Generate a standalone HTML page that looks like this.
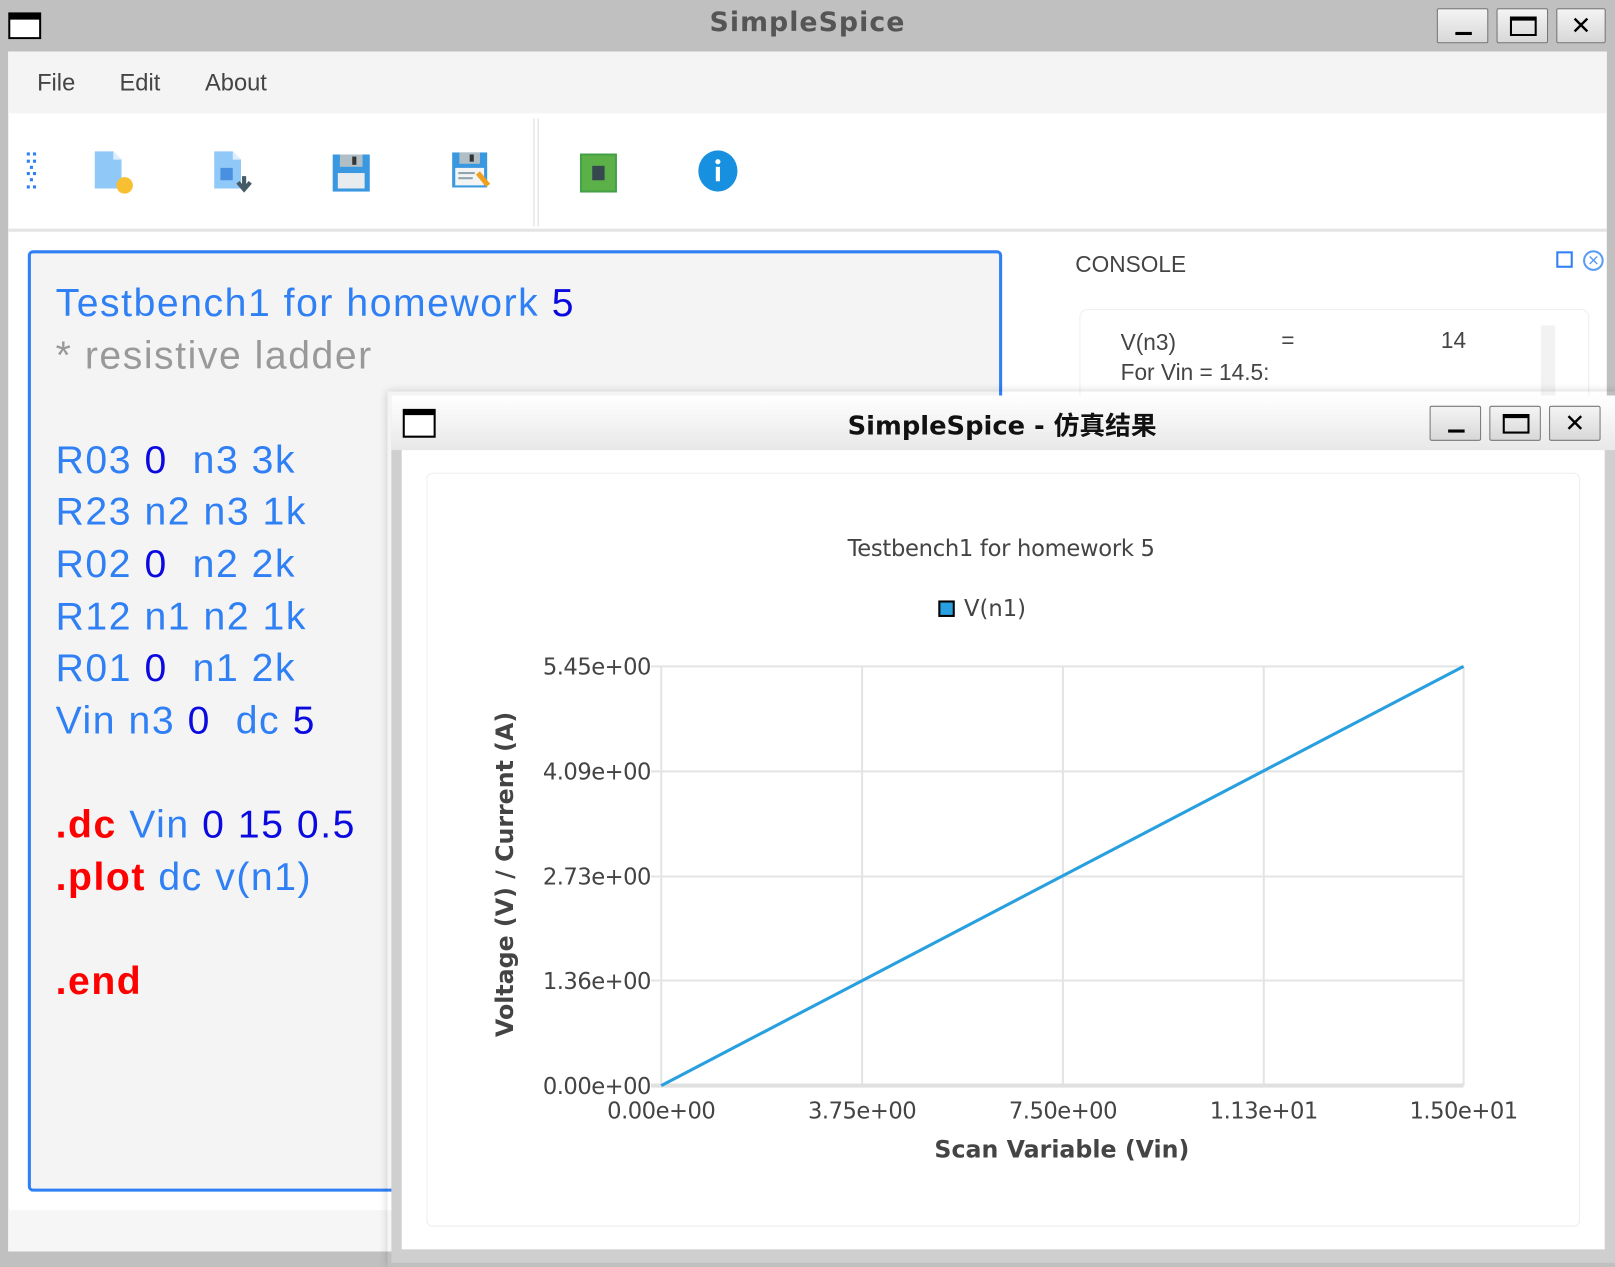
<!DOCTYPE html>
<html><head><meta charset="utf-8"><style>
*{margin:0;padding:0;box-sizing:border-box}
html,body{width:1615px;height:1263px;overflow:hidden;background:#c0c0c0;font-family:"Liberation Sans","Noto Sans CJK SC",sans-serif}
#w{position:absolute;left:0;top:0;width:1568px;height:1226px;transform:scale(1.02997);transform-origin:0 0;background:#c0c0c0}
.a{position:absolute}
.btn{position:absolute;border:1px solid #777;background:linear-gradient(#f4f4f4,#d8d8d8);border-radius:2px}
.ed{font-size:38px;color:#2f7ff5;white-space:pre;line-height:50.6px;letter-spacing:1.5px}
.d{color:#0a0ae0}.r{color:#f00;font-weight:bold}.g{color:#999}
.tk{position:absolute;font-size:22px;color:#444;font-family:"DejaVu Sans",sans-serif;letter-spacing:-0.5px}
</style></head><body><div id="w">
<div class="a" style="left:8px;top:12px;width:32px;height:26px;border:2px solid #000;border-top-width:7px;background:#fff"></div>
<div class="a" style="left:0;width:1568px;top:7px;text-align:center;font-size:26px;font-weight:bold;color:#555;font-family:'DejaVu Sans',sans-serif;letter-spacing:1px">SimpleSpice</div>
<div class="btn" style="left:1395px;top:8px;width:50px;height:34px"><div class="a" style="left:17px;top:22px;width:16px;height:3px;background:#000"></div></div>
<div class="btn" style="left:1453px;top:8px;width:50px;height:34px"><div class="a" style="left:12px;top:7px;width:26px;height:19px;border:2px solid #000;border-top-width:4px"></div></div>
<div class="btn" style="left:1511px;top:8px;width:48px;height:34px;text-align:center;font:bold 24px 'DejaVu Sans';line-height:32px">✕</div>
<div class="a" style="left:8px;top:50px;width:1552px;height:1165px;background:#fff"></div>
<div class="a" style="left:8px;top:50px;width:1552px;height:60px;background:#f4f4f4;font-size:23px;color:#444">
<span class="a" style="left:28px;top:17px">File</span><span class="a" style="left:108px;top:17px">Edit</span><span class="a" style="left:191px;top:17px">About</span></div>
<div class="a" style="left:8px;top:222px;width:1552px;height:3px;background:#e4e4e4"></div>
<div class="a" style="left:518px;top:115px;width:5px;height:105px;border-left:1px solid #ddd;border-right:1px solid #ddd"></div>
<svg class="a" style="left:24px;top:147px" width="16" height="42"><g fill="#2f7ff5"><rect x="2" y="1" width="3" height="3"/><rect x="8" y="1" width="3" height="3"/><rect x="2" y="8" width="3" height="3"/><rect x="8" y="8" width="3" height="3"/><rect x="5" y="14" width="3" height="3"/><rect x="2" y="20" width="3" height="3"/><rect x="8" y="20" width="3" height="3"/><rect x="5" y="26" width="3" height="3"/><rect x="2" y="33" width="3" height="3"/><rect x="8" y="33" width="3" height="3"/></g></svg>
<svg class="a" style="left:90px;top:145px" width="45" height="45"><path d="M2 2h18l8 8v28H2z" fill="#90c8f8"/><path d="M20 2v8h8z" fill="#dceeff"/><circle cx="31" cy="35" r="8" fill="#f8c030"/></svg>
<svg class="a" style="left:206px;top:145px" width="45" height="45"><path d="M2 2h18l8 8v28H2z" fill="#90c8f8"/><path d="M20 2v8h8z" fill="#dceeff"/><rect x="8" y="18" width="12" height="12" fill="#4a90e0"/><path d="M31 26v10M25 32l6 7 6-7" stroke="#455a64" stroke-width="4" fill="none"/></svg>
<svg class="a" style="left:322px;top:148px" width="40" height="40"><rect x="1" y="2" width="36" height="36" fill="#3a98e0"/><rect x="8" y="2" width="22" height="12" fill="#b0bec5"/><rect x="20" y="4" width="4" height="8" fill="#333"/><rect x="6" y="20" width="26" height="15" fill="#e8ecef"/></svg>
<svg class="a" style="left:437px;top:146px" width="42" height="42"><rect x="2" y="2" width="34" height="34" fill="#3a98e0"/><rect x="9" y="2" width="20" height="11" fill="#b0bec5"/><rect x="19" y="4" width="4" height="7" fill="#333"/><rect x="5" y="17" width="28" height="17" fill="#f4f4f4"/><path d="M8 22h16M8 27h14" stroke="#90a4ae" stroke-width="2"/><path d="M27 22l10 12" stroke="#f0a020" stroke-width="5"/></svg>
<svg class="a" style="left:563px;top:149px" width="38" height="38"><rect x="1" y="1" width="34" height="36" fill="#5cb048" stroke="#43a047" stroke-width="2"/><rect x="12" y="12" width="12" height="14" fill="#37474f"/></svg>
<svg class="a" style="left:677px;top:146px" width="42" height="42"><ellipse cx="20" cy="20" rx="19" ry="20" fill="#1890e0"/><rect x="18" y="16" width="4" height="14" fill="#fff"/><circle cx="20" cy="11" r="2.5" fill="#fff"/></svg>
<div class="a" style="left:27px;top:243px;width:946px;height:914px;border:3px solid #2f7ff5;border-radius:5px;background:#f4f4f4"></div>
<div class="a" style="left:8px;top:1175px;width:372px;height:40px;background:#f6f6f6"></div>
<div class="a ed" style="left:54px;top:270px">Testbench1 for homework <span class="d">5</span>
<span class="g">* resistive ladder</span>

R03 <span class="d">0</span>  n3 3k
R23 n2 n3 1k
R02 <span class="d">0</span>  n2 2k
R12 n1 n2 1k
R01 <span class="d">0</span>  n1 2k
Vin n3 <span class="d">0</span>  dc <span class="d">5</span>

<span class="r">.dc</span> Vin <span class="d">0 15 0.5</span>
<span class="r">.plot</span> dc v(n1)

<span class="r">.end</span></div>
<div class="a" style="left:1044px;top:244px;font-size:22px;color:#444">CONSOLE</div>
<div class="a" style="left:1511px;top:244px;width:16px;height:16px;border:2px solid #2f7ff5;background:#fff"></div>
<div class="a" style="left:1537px;top:243px;width:20px;height:20px;border:2px solid #5a9cf5;border-radius:50%;color:#5a9cf5;font-size:14px;text-align:center;line-height:16px">✕</div>
<div class="a" style="left:1048px;top:300px;width:495px;height:120px;border:1px solid #eee;border-radius:8px;background:#fff"></div>
<div class="a" style="left:1496px;top:316px;width:14px;height:80px;background:#f2f2f2"></div>
<div class="a" style="left:1088px;top:318px;font-size:22px;color:#444;line-height:29px">V(n3)<br>For Vin = 14.5:</div>
<div class="a" style="left:1244px;top:318px;font-size:22px;color:#444">=</div>
<div class="a" style="left:1399px;top:318px;font-size:22px;color:#444">14</div>
<div class="a" style="left:376px;top:380px;width:1196px;height:850px;box-shadow:0 0 8px rgba(0,0,0,.18)"></div>
<div class="a" style="left:380px;top:384px;width:1188px;height:842px;background:#cfcfcf"></div>
<div class="a" style="left:380px;top:384px;width:1188px;height:53px;background:linear-gradient(#fff,#e8e8e8)"></div>
<div class="a" style="left:390px;top:437px;width:1168px;height:776px;background:#fff"></div>
<div class="a" style="left:391px;top:397px;width:32px;height:28px;border:2px solid #000;border-top-width:6px;background:#fff"></div>
<div class="a" style="left:380px;width:1186px;top:394px;text-align:center;font-size:25px;font-weight:bold;color:#111;font-family:'DejaVu Sans','Noto Sans CJK SC',sans-serif">SimpleSpice - 仿真结果</div>
<div class="btn" style="left:1388px;top:394px;width:50px;height:34px"><div class="a" style="left:17px;top:22px;width:16px;height:3px;background:#000"></div></div>
<div class="btn" style="left:1446px;top:394px;width:50px;height:34px"><div class="a" style="left:12px;top:7px;width:26px;height:19px;border:2px solid #000;border-top-width:4px"></div></div>
<div class="btn" style="left:1504px;top:394px;width:50px;height:34px;text-align:center;font:bold 24px 'DejaVu Sans';line-height:32px">✕</div>
<div class="a" style="left:414px;top:459px;width:1120px;height:732px;border:1px solid #eee;border-radius:6px"></div>
<svg class="a" style="left:0;top:0" width="1568" height="1226">
<g stroke="#e4e4e4" stroke-width="2">
<path d="M642 647V1054M837 647V1054M1032 647V1054M1227 647V1054M1421 647V1054"/>
<path d="M632 647H1421M632 749H1421M632 851H1421M632 952H1421"/>
</g>
<path d="M632 1054H1421" stroke="#e0e0e0" stroke-width="4"/>
<path d="M642 1054L1421 647" stroke="#28a0e0" stroke-width="3"/>
<rect x="912" y="584" width="14" height="14" fill="#28a0e0" stroke="#000" stroke-width="2"/>
</svg>
<div class="a" style="left:414px;width:1116px;top:521px;text-align:center;font-size:22px;color:#444;font-family:'DejaVu Sans',sans-serif;letter-spacing:-0.3px">Testbench1 for homework 5</div>
<div class="a" style="left:936px;top:579px;font-size:22px;color:#444;font-family:'DejaVu Sans',sans-serif">V(n1)</div>
<div class="tk" style="left:500px;width:132px;text-align:right;top:636px">5.45e+00</div>
<div class="tk" style="left:500px;width:132px;text-align:right;top:738px">4.09e+00</div>
<div class="tk" style="left:500px;width:132px;text-align:right;top:840px">2.73e+00</div>
<div class="tk" style="left:500px;width:132px;text-align:right;top:941px">1.36e+00</div>
<div class="tk" style="left:500px;width:132px;text-align:right;top:1043px">0.00e+00</div>
<div class="tk" style="left:567px;width:150px;text-align:center;top:1067px">0.00e+00</div>
<div class="tk" style="left:762px;width:150px;text-align:center;top:1067px">3.75e+00</div>
<div class="tk" style="left:957px;width:150px;text-align:center;top:1067px">7.50e+00</div>
<div class="tk" style="left:1152px;width:150px;text-align:center;top:1067px">1.13e+01</div>
<div class="tk" style="left:1346px;width:150px;text-align:center;top:1067px">1.50e+01</div>
<div class="a" style="left:831px;width:400px;text-align:center;top:1104px;font-size:23px;font-weight:bold;color:#444;font-family:'DejaVu Sans',sans-serif">Scan Variable (Vin)</div>
<div class="a" style="left:291px;width:400px;text-align:center;top:836px;font-size:23px;font-weight:bold;color:#444;font-family:'DejaVu Sans',sans-serif;transform:rotate(-90deg)">Voltage (V) / Current (A)</div>
</div></body></html>
